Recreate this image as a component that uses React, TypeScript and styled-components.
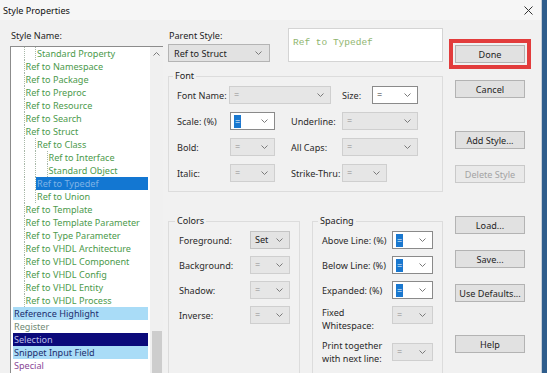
import React from "react";
import styled, { createGlobalStyle, css } from "styled-components";

const GlobalStyle = createGlobalStyle`
  html, body {
    margin: 0;
    padding: 0;
    overflow: hidden;
    background: #2f5d8c;
  }
  body {
    font-family: "Noto Sans", "Open Sans", sans-serif;
    font-size: 9.1px;
    color: #1e1e1e;
  }
`;

type Tone = "green" | "selected" | "highlight" | "muted" | "navy" | "purple";

interface StyleItem {
  text: string;
  level: number;
  tone?: Tone;
}

const styleItems: StyleItem[] = [
  { text: "Standard Property", level: 2 },
  { text: "Ref to Namespace", level: 1 },
  { text: "Ref to Package", level: 1 },
  { text: "Ref to Preproc", level: 1 },
  { text: "Ref to Resource", level: 1 },
  { text: "Ref to Search", level: 1 },
  { text: "Ref to Struct", level: 1 },
  { text: "Ref to Class", level: 2 },
  { text: "Ref to Interface", level: 3 },
  { text: "Standard Object", level: 3 },
  { text: "Ref to Typedef", level: 2, tone: "selected" },
  { text: "Ref to Union", level: 2 },
  { text: "Ref to Template", level: 1 },
  { text: "Ref to Template Parameter", level: 1 },
  { text: "Ref to Type Parameter", level: 1 },
  { text: "Ref to VHDL Architecture", level: 1 },
  { text: "Ref to VHDL Component", level: 1 },
  { text: "Ref to VHDL Config", level: 1 },
  { text: "Ref to VHDL Entity", level: 1 },
  { text: "Ref to VHDL Process", level: 1 },
  { text: "Reference Highlight", level: 0, tone: "highlight" },
  { text: "Register", level: 0, tone: "muted" },
  { text: "Selection", level: 0, tone: "navy" },
  { text: "Snippet Input Field", level: 0, tone: "highlight" },
  { text: "Special", level: 0, tone: "purple" },
];

const toneStyles: Record<Tone, ReturnType<typeof css>> = {
  green: css`
    color: #4c9a4c;
  `,
  selected: css`
    color: #7fb3e6;
    background: #1377d2;
  `,
  highlight: css`
    color: #1d2f6e;
    background: #a9dcf7;
  `,
  muted: css`
    color: #6f8a74;
  `,
  navy: css`
    color: #b9bde8;
    background: #0b0a7a;
  `,
  purple: css`
    color: #8a4796;
  `,
};

function Chevron({ up }: { up?: boolean }) {
  return (
    <svg width="7" height="4" viewBox="0 0 7 4">
      <path
        d={up ? "M0.5 3.5 L3.5 0.5 L6.5 3.5" : "M0.5 0.5 L3.5 3.5 L6.5 0.5"}
        fill="none"
        stroke="#7a7a7a"
        strokeWidth="1"
      />
    </svg>
  );
}

type ComboKind = "enabled" | "disabled" | "button";

function Combo({
  value = "=",
  width,
  kind = "disabled",
  picked,
}: {
  value?: string;
  width: number;
  kind?: ComboKind;
  picked?: boolean;
}) {
  return (
    <ComboBox $width={width} $kind={kind}>
      {picked ? <Picked>{value}</Picked> : <ComboValue>{value}</ComboValue>}
      <Chevron />
    </ComboBox>
  );
}

function App(): JSX.Element {
  return (
    <>
      <GlobalStyle />
      <Dialog>
        <TitleBar>
          <span>Style Properties</span>
          <svg width="9" height="9" viewBox="0 0 9 9">
            <path d="M0.5 0.5 L8.5 8.5 M8.5 0.5 L0.5 8.5" stroke="#333" strokeWidth="1" />
          </svg>
        </TitleBar>
        <Body>
          <LeftColumn>
            <Caption>Style Name:</Caption>
            <ListBox>
              <ListRows>
                {styleItems.map((item) => (
                  <Row key={item.text}>
                    {Array.from({ length: item.level }).map((_, i) => (
                      <Guide key={i} />
                    ))}
                    <ItemText $tone={item.tone ?? "green"} $wide={item.level === 0 || item.tone === "selected"}>
                      {item.text}
                    </ItemText>
                  </Row>
                ))}
              </ListRows>
              <ScrollBar>
                <ScrollArrow>
                  <Chevron up />
                </ScrollArrow>
                <ScrollThumb />
              </ScrollBar>
            </ListBox>
          </LeftColumn>

          <MiddleColumn>
            <TopRow>
              <ParentBlock>
                <Caption>Parent Style:</Caption>
                <ParentCombo>
                  <span>Ref to Struct</span>
                  <Chevron />
                </ParentCombo>
              </ParentBlock>
              <Preview>Ref to Typedef</Preview>
            </TopRow>

            <Group $width={275} $top={8}>
              <Legend>Font</Legend>
              <Rows $gap={8} $bottom={9}>
                <FieldRow>
                  <FieldLabel $width={52}>Font Name:</FieldLabel>
                  <Combo width={102} />
                  <FieldLabel $width={30} $left={11}>
                    Size:
                  </FieldLabel>
                  <Combo width={46} kind="enabled" />
                </FieldRow>
                <FieldRow>
                  <FieldLabel $width={53}>Scale: (%)</FieldLabel>
                  <Combo width={45} kind="enabled" picked />
                  <FieldLabel $width={51} $left={16}>
                    Underline:
                  </FieldLabel>
                  <Combo width={76} />
                </FieldRow>
                <FieldRow>
                  <FieldLabel $width={53}>Bold:</FieldLabel>
                  <Combo width={45} />
                  <FieldLabel $width={51} $left={16}>
                    All Caps:
                  </FieldLabel>
                  <Combo width={76} />
                </FieldRow>
                <FieldRow>
                  <FieldLabel $width={53}>Italic:</FieldLabel>
                  <Combo width={45} />
                  <FieldLabel $width={51} $left={16}>
                    Strike-Thru:
                  </FieldLabel>
                  <Combo width={45} />
                </FieldRow>
              </Rows>
            </Group>

            <BottomRow>
              <Group $width={132} $pad={10}>
                <Legend>Colors</Legend>
                <Rows $gap={7} $bottom={40}>
                  <FieldRow>
                    <FieldLabel $width={71}>Foreground:</FieldLabel>
                    <Combo width={40} value="Set" kind="button" />
                  </FieldRow>
                  <FieldRow>
                    <FieldLabel $width={71}>Background:</FieldLabel>
                    <Combo width={40} />
                  </FieldRow>
                  <FieldRow>
                    <FieldLabel $width={71}>Shadow:</FieldLabel>
                    <Combo width={40} />
                  </FieldRow>
                  <FieldRow>
                    <FieldLabel $width={71}>Inverse:</FieldLabel>
                    <Combo width={40} />
                  </FieldRow>
                </Rows>
              </Group>
              <Group $width={131} $pad={9}>
                <Legend>Spacing</Legend>
                <Rows $gap={7} $bottom={8}>
                  <FieldRow>
                    <FieldLabel $width={70}>Above Line: (%)</FieldLabel>
                    <Combo width={41} kind="enabled" picked />
                  </FieldRow>
                  <FieldRow>
                    <FieldLabel $width={70}>Below Line: (%)</FieldLabel>
                    <Combo width={41} kind="enabled" picked />
                  </FieldRow>
                  <FieldRow>
                    <FieldLabel $width={70}>Expanded: (%)</FieldLabel>
                    <Combo width={41} kind="enabled" picked />
                  </FieldRow>
                  <FieldRow $top>
                    <FieldLabel $width={70}>
                      Fixed
                      <br />
                      Whitespace:
                    </FieldLabel>
                    <Combo width={41} />
                  </FieldRow>
                  <FieldRow>
                    <FieldLabel $width={70}>
                      Print together
                      <br />
                      with next line:
                    </FieldLabel>
                    <Combo width={41} />
                  </FieldRow>
                </Rows>
              </Group>
            </BottomRow>
          </MiddleColumn>

          <ButtonColumn>
            <DialogButton $gap={0} $marked>
              Done
            </DialogButton>
            <DialogButton $gap={17}>Cancel</DialogButton>
            <DialogButton $gap={33}>Add Style...</DialogButton>
            <DialogButton $gap={16} disabled>
              Delete Style
            </DialogButton>
            <DialogButton $gap={33}>Load...</DialogButton>
            <DialogButton $gap={16}>Save...</DialogButton>
            <DialogButton $gap={16}>Use Defaults...</DialogButton>
            <DialogButton $gap={33}>Help</DialogButton>
          </ButtonColumn>
        </Body>
      </Dialog>
    </>
  );
}
export default App;

const Dialog = styled.div`
  width: 541px;
  height: 373px;
  display: flex;
  flex-direction: column;
  overflow: hidden;
  background: #f1f1f1;
  border-right: 1px solid #c5ced8;
`;

const TitleBar = styled.div`
  height: 20px;
  flex-shrink: 0;
  display: flex;
  align-items: center;
  justify-content: space-between;
  padding: 0 8px 0 3px;
  background: #f6f6f6;
  color: #111;
`;

const Body = styled.div`
  flex: 1;
  display: grid;
  grid-template-columns: 153px 275px 80px;
  column-gap: 5px;
  padding-left: 10px;
  min-height: 0;
`;

const LeftColumn = styled.div`
  display: flex;
  flex-direction: column;
  padding-top: 9px;
  min-height: 0;
`;

const Caption = styled.div`
  height: 13px;
  line-height: 13px;
  padding-left: 1px;
`;

const ListBox = styled.div`
  margin-top: 4px;
  height: 330px;
  flex-shrink: 0;
  display: flex;
  background: #fff;
  border-top: 1px solid #8c8c8c;
  border-left: 1px solid #8c8c8c;
  overflow: hidden;
`;

const ListRows = styled.div`
  flex: 1;
  display: flex;
  flex-direction: column;
  padding-right: 2px;
`;

const Row = styled.div`
  height: 13px;
  flex-shrink: 0;
  display: flex;
  padding-left: 2px;
`;

const Guide = styled.span`
  width: 11.5px;
  flex-shrink: 0;
  box-sizing: border-box;
  border-right: 1px dotted #a8b8a8;
`;

const ItemText = styled.span<{ $tone: Tone; $wide: boolean }>`
  line-height: 13px;
  padding: 0 1px;
  white-space: nowrap;
  ${(p) => p.$wide && "flex: 1;"}
  ${(p) => toneStyles[p.$tone]}
`;

const ScrollBar = styled.div`
  width: 13px;
  flex-shrink: 0;
  display: flex;
  flex-direction: column;
  align-items: center;
  background: #f0f0f0;
`;

const ScrollArrow = styled.div`
  height: 14px;
  display: flex;
  align-items: center;
  justify-content: center;
`;

const ScrollThumb = styled.div`
  margin-top: auto;
  width: 10px;
  height: 46px;
  background: #cdcdcd;
`;

const MiddleColumn = styled.div`
  display: flex;
  flex-direction: column;
`;

const TopRow = styled.div`
  display: flex;
  align-items: flex-start;
`;

const ParentBlock = styled.div`
  margin-top: 9px;
  width: 102px;
  display: flex;
  flex-direction: column;
`;

const ParentCombo = styled.div`
  margin-top: 2px;
  height: 18px;
  box-sizing: border-box;
  display: flex;
  align-items: center;
  justify-content: space-between;
  padding: 0 7px 0 5px;
  background: #e2e2e2;
  border: 1px solid #b4b4b4;
`;

const Preview = styled.div`
  margin: 8px 0 0 18px;
  width: 155px;
  height: 34px;
  box-sizing: border-box;
  padding: 8px 0 0 4px;
  background: #fff;
  border: 1px solid #d4d4d4;
  font-family: "Liberation Mono", "DejaVu Sans Mono", monospace;
  font-size: 9.5px;
  color: #8fb56f;
`;

const Group = styled.fieldset<{ $width: number; $top?: number; $pad?: number }>`
  margin: ${(p) => p.$top ?? 0}px 0 0;
  width: ${(p) => p.$width}px;
  box-sizing: border-box;
  min-width: 0;
  padding: 0 0 0 ${(p) => p.$pad ?? 8}px;
  border: 1px solid #dcdcdc;
`;

const Legend = styled.legend`
  margin-left: -4px;
  padding: 0 2px;
  line-height: 12px;
  color: #222;
`;

const Rows = styled.div<{ $gap: number; $bottom: number }>`
  margin-top: 4px;
  padding-bottom: ${(p) => p.$bottom}px;
  display: flex;
  flex-direction: column;
  gap: ${(p) => p.$gap}px;
`;

const FieldRow = styled.div<{ $top?: boolean }>`
  display: flex;
  align-items: ${(p) => (p.$top ? "flex-start" : "center")};
  min-height: 18px;
`;

const FieldLabel = styled.span<{ $width: number; $left?: number }>`
  width: ${(p) => p.$width}px;
  margin-left: ${(p) => p.$left ?? 0}px;
  flex-shrink: 0;
  line-height: 13px;
  white-space: nowrap;
  color: #2a2a2a;
`;

const comboKinds: Record<ComboKind, ReturnType<typeof css>> = {
  enabled: css`
    background: #fff;
    border-color: #8a8a8a;
    color: #333;
  `,
  disabled: css`
    background: #e6e6e6;
    border-color: #cfcfcf;
    color: #8c8c8c;
  `,
  button: css`
    background: #e3e3e3;
    border-color: #c4c4c4;
    color: #222;
  `,
};

const ComboBox = styled.div<{ $width: number; $kind: ComboKind }>`
  width: ${(p) => p.$width}px;
  height: 18px;
  flex-shrink: 0;
  box-sizing: border-box;
  display: flex;
  align-items: center;
  justify-content: space-between;
  padding: 0 6px 0 3px;
  border: 1px solid;
  ${(p) => comboKinds[p.$kind]}
`;

const ComboValue = styled.span`
  padding-left: 1px;
  line-height: 12px;
`;

const Picked = styled.span`
  padding: 0 1px;
  line-height: 13px;
  background: #1a78cf;
  color: #fff;
`;

const BottomRow = styled.div`
  margin-top: 23px;
  display: flex;
  gap: 12px;
`;

const ButtonColumn = styled.div`
  display: flex;
  flex-direction: column;
  align-items: flex-start;
  padding: 25px 0 0 7px;
`;

const DialogButton = styled.button<{ $gap: number; $marked?: boolean }>`
  margin-top: ${(p) => p.$gap}px;
  width: 70px;
  height: 18px;
  padding: 0;
  font: inherit;
  color: #1e1e1e;
  background: #e1e1e1;
  border: 1px solid #b3b3b3;
  ${(p) =>
    p.$marked &&
    css`
      outline: 4px solid #e23c3c;
      outline-offset: 2px;
    `}
  &:disabled {
    color: #a3a3a3;
    background: #e9e9e9;
    border-color: #c9c9c9;
  }
`;
